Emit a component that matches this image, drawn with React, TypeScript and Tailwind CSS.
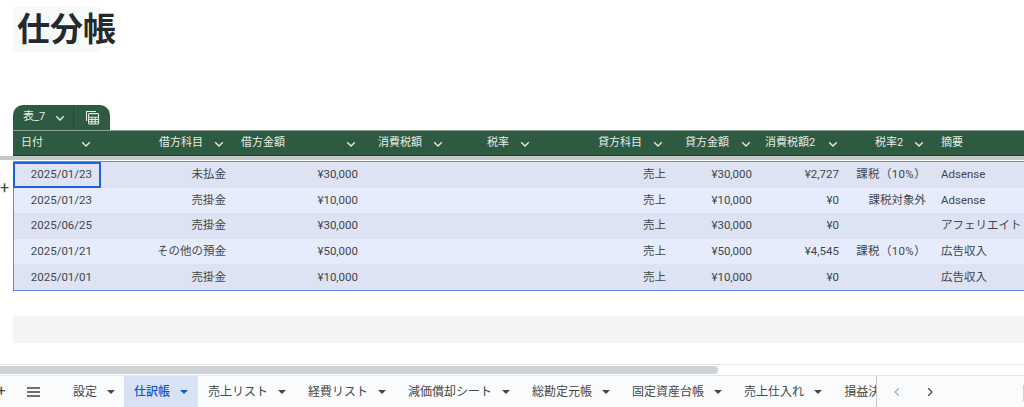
import React from 'react'

const rowsData = [
  ['2025/01/23', '未払金', '¥30,000', '売上', '¥30,000', '¥2,727', '課税（10%）', 'Adsense'],
  ['2025/01/23', '売掛金', '¥10,000', '売上', '¥10,000', '¥0', '課税対象外', 'Adsense'],
  ['2025/06/25', '売掛金', '¥30,000', '売上', '¥30,000', '¥0', '', 'アフェリエイト'],
  ['2025/01/21', 'その他の預金', '¥50,000', '売上', '¥50,000', '¥4,545', '課税（10%）', '広告収入'],
  ['2025/01/01', '売掛金', '¥10,000', '売上', '¥10,000', '¥0', '', '広告収入'],
]

const headers = [
  { label: '日付', cls: 'w-[87px] pl-2', chevron: 'ml-[37px]' },
  { label: '借方科目', cls: 'w-[132px] pl-[59px]', chevron: 'ml-[10px]' },
  { label: '借方金額', cls: 'w-[132px] pl-[9px]', chevron: 'ml-[60px]' },
  { label: '消費税額', cls: 'w-[88px] pl-[14px]', chevron: 'ml-[10px]' },
  { label: '税率', cls: 'w-[131px] pl-[35px]', chevron: 'ml-[10px]' },
  { label: '貸方科目', cls: 'w-[97px] pl-[15px]', chevron: 'ml-[10px]' },
  { label: '貸方金額', cls: 'w-[80px] pl-[5px]', chevron: 'ml-[11px]' },
  { label: '消費税額2', cls: 'w-[85px] pl-[5px]', chevron: 'ml-[12px]' },
  { label: '税率2', cls: 'w-[90px] pl-[30px]', chevron: 'ml-[10px]' },
  { label: '摘要', cls: 'w-[100px] pl-[6px]', chevron: 'hidden' },
]

const tabs = ['設定', '仕訳帳', '売上リスト', '経費リスト', '減価償却シート', '総勘定元帳', '固定資産台帳', '売上仕入れ']

const Chevron = ({ className = '' }: { className?: string }) => (
  <svg width="12" height="12" viewBox="0 0 12 12" fill="none" stroke="currentColor" strokeWidth="1.3" className={className}>
    <path d="M2.2 4.3 6 8l3.8-3.7" />
  </svg>
)

const Caret = () => (
  <svg width="8" height="4" viewBox="0 0 8 4" fill="currentColor" className="ml-[10px] shrink-0">
    <path d="M0 0h8L4 4z" />
  </svg>
)

const App: React.FC = () => {
  return (
    <div className="relative h-[407px] w-[1024px] overflow-hidden bg-white font-['Roboto','Noto_Sans_CJK_JP',sans-serif] text-[#44474a]">
      <div className="h-[105px] pl-[13px] pt-[7px]">
        <div className="h-[45px] w-[87px] bg-[#f8f9fa]">
          <h1 className="whitespace-nowrap pl-[4px] text-[33px] leading-[45px] font-bold text-[#24292c]">仕分帳</h1>
        </div>
      </div>

      <div className="ml-[13px] flex h-[25px] w-[97px] rounded-t-[10px] bg-[#2d5a41] text-[#e6ece8]">
        <div className="flex w-[61px] items-center border-r border-[#234a34] pl-[10px] text-[11px]">
          表_7
          <Chevron className="ml-[9px]" />
        </div>
        <div className="flex flex-1 items-center justify-center">
          <svg width="15" height="15" viewBox="0 0 15 15" fill="none" stroke="currentColor" strokeWidth="1.1">
            <path d="M1.5 11V1.5H11" />
            <rect x="3.6" y="3.6" width="10" height="10.4" rx="1" />
            <path d="M3.6 7.2h10M3.6 9.5h10M3.6 11.8h10M6.9 7.2V14M10.2 7.2V14" />
          </svg>
        </div>
      </div>

      <div className="ml-[13px] flex h-[26px] border-t border-b border-t-[#8fa397] border-b-[#1f3f2e] bg-[#2d5a41] pt-px text-[11px] whitespace-nowrap text-[#e6ece8]">
        {headers.map((h) => (
          <div key={h.label} className={`flex shrink-0 items-center ${h.cls}`}>
            {h.label}
            <Chevron className={`shrink-0 ${h.chevron}`} />
          </div>
        ))}
      </div>

      <div className="h-[4px] bg-[#c4c7c5]" />

      <div className="relative mt-px ml-[13px] border-y border-l border-[#5b8def] text-[11.5px] whitespace-nowrap">
        {rowsData.map((r, i) => (
          <div key={i} className={`flex h-[25.6px] items-center ${i % 2 === 0 ? 'bg-[#dde3f2]' : 'bg-[#e6ecfb]'}`}>
            <div className="w-[86px] shrink-0 pr-2 text-right">{r[0]}</div>
            <div className="w-[132px] shrink-0 pr-[6px] text-right">{r[1]}</div>
            <div className="w-[132px] shrink-0 pr-[6px] text-right">{r[2]}</div>
            <div className="w-[308px] shrink-0 pr-[6px] text-right">{r[3]}</div>
            <div className="w-[86px] shrink-0 pr-[6px] text-right">{r[4]}</div>
            <div className="w-[87px] shrink-0 pr-[6px] text-right">{r[5]}</div>
            <div className={`w-[90px] shrink-0 pr-[9px] text-right ${r[6].includes('（') ? 'tracking-[0.35px]' : ''}`}>{r[6]}</div>
            <div className="pl-[6px]">{r[7]}</div>
          </div>
        ))}
        <div className="absolute top-0 left-[-1px] h-[26px] w-[88px] border-2 border-[#1a63d8]" />
      </div>

      <div className="mt-[25px] ml-[13px] h-[27px] bg-[#f3f4f6]" />

      <div className="absolute bottom-[32px] left-0 h-[11px] w-full border-t border-[#e3e5e7] pt-px">
        <div className="h-[8px] w-[718px] rounded-r-[4px] bg-[#cfd2d6]" />
      </div>

      <div className="absolute bottom-0 left-0 flex h-[32px] w-full items-center border-t border-[#e3e5e7] bg-[#f9fbfd] text-[12px] whitespace-nowrap">
        <span className="absolute left-[-3px] text-[15px] text-[#444746]">+</span>
        <svg width="13" height="10" viewBox="0 0 13 10" fill="none" stroke="#444746" strokeWidth="1.3" className="ml-[27px] shrink-0">
          <path d="M0 1h13M0 5h13M0 9h13" />
        </svg>
        <div className="ml-[23px] flex h-full w-[814px] shrink-0 items-center overflow-hidden border-r border-[#c4c7c5]">
          {tabs.map((t, i) => (
            <div
              key={t}
              className={`flex h-full shrink-0 items-center pl-[10px] ${
                i === 0 ? 'pr-[9px] text-[#444746]' : i === 1 ? 'bg-[#d8e2f5] pr-[10px] font-medium text-[#0b57d0]' : 'pr-[12px] text-[#444746]'
              }`}
            >
              <span className="pt-px">{t}</span>
              <Caret />
            </div>
          ))}
          <div className="shrink-0 pl-[10px] pt-px text-[#444746]">損益決算書</div>
        </div>
        <Chevron className="ml-[14px] rotate-90 text-[#a8abaf]" />
        <Chevron className="ml-[21px] -rotate-90 text-[#444746]" />
      </div>

      <span className="absolute top-[179px] left-0 text-[16px] leading-[18px] text-[#444746]">+</span>
      <div className="absolute top-[385px] right-0 h-[16px] w-px bg-[#b7dfc4]" />
    </div>
  )
}

export default App
